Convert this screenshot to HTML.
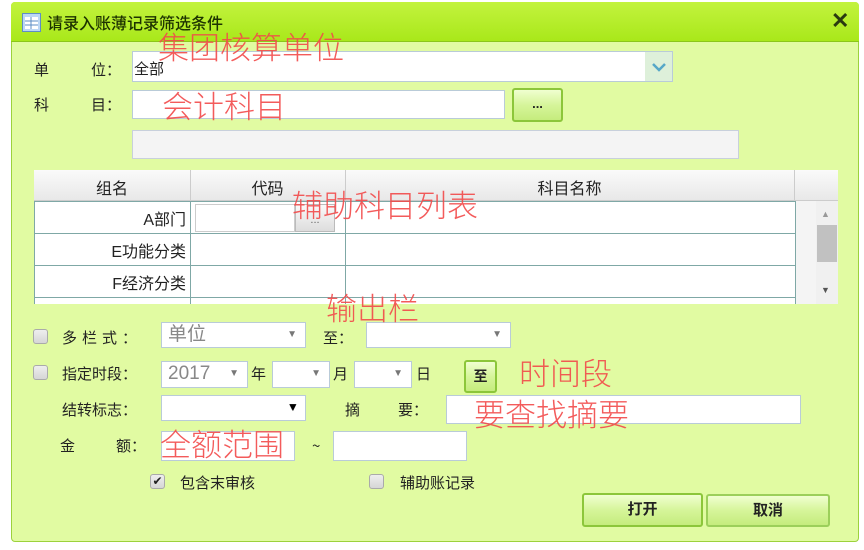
<!DOCTYPE html>
<html><head><meta charset="utf-8"><style>
*{box-sizing:border-box;margin:0;padding:0}
body{width:864px;height:550px;background:#fff;position:relative;overflow:hidden;font-family:"Liberation Sans","Noto Sans CJK SC",sans-serif;font-size:14px;color:#222}
.a{position:absolute}
#dlg{left:11px;top:2px;width:848px;height:540px;background:#e1fba2;border:1px solid #9cd23c;border-radius:4px}
#tb{left:11px;top:2px;width:848px;height:40px;background:linear-gradient(#c3f33e,#a9e81a);border-bottom:1px solid #8bc61a;border-radius:4px 4px 0 0}
.in{position:absolute;background:#fff;border:1px solid #b9cbd8}
.lbl{position:absolute;font-size:15px;color:#222;font-family:"Noto Sans CJK SC",sans-serif;line-height:20px}
.red{position:absolute;color:#f24a4a;font-size:31px;font-family:"Noto Sans CJK SC",sans-serif;font-weight:300;line-height:1;opacity:.9}
.sel{position:absolute;background:#fff;border:1px solid #b9cbd8;font-size:19px;color:#888;padding-left:6px;line-height:24px}
.sel:after{content:"▼";position:absolute;right:8px;top:0;font-size:10px;color:#777}
.cb{position:absolute;width:15px;height:15px;border:1px solid #aaa;border-radius:3px;background:linear-gradient(#eee,#d6d6d6)}
.btn{position:absolute;border:2px solid #8cc63a;border-radius:3px;background:linear-gradient(#f0ffd0,#d6f59a 50%,#c5ec7d);font-weight:bold;font-size:15px;text-align:center;color:#222}
td{border:1px solid #7fa8a6;height:32px;font-size:16px;text-align:right;padding-right:4px;background:#fff}
</style></head><body>
<div class="a" id="dlg"></div>
<div class="a" id="tb"></div>
<svg class="a" style="left:22px;top:13px" width="19" height="19"><rect x=".5" y=".5" width="18" height="18" fill="#bcd7f5" stroke="#5e8dc6"/><rect x="3" y="4" width="13" height="12" fill="#fff"/><path d="M3 8H16M3 12H16M9 4V16" stroke="#5e8dc6"/></svg>
<div class="a" style="left:47px;top:10px;font-size:16px;color:#1d3300;font-family:'Noto Sans CJK SC',sans-serif;font-weight:500">请录入账薄记录筛选条件</div>
<div class="a" style="left:831px;top:8px;font-size:22px;font-weight:bold;color:#2a3a10">✕</div>

<div class="lbl" style="left:34px;top:60px">单</div><div class="lbl" style="left:91px;top:60px">位：</div>
<div class="in" style="left:132px;top:51px;width:541px;height:31px;font-size:15px;padding:6px 0 0 1px">全部</div>
<div class="a" style="left:645px;top:52px;width:27px;height:29px;background:#def0da"></div>
<svg class="a" style="left:651px;top:62px" width="16" height="10"><path d="M2 2L8 8L14 2" stroke="#57a7c8" stroke-width="2.5" fill="none"/></svg>

<div class="lbl" style="left:34px;top:95px">科</div><div class="lbl" style="left:91px;top:95px">目：</div>
<div class="in" style="left:132px;top:90px;width:373px;height:29px"></div>
<div class="btn" style="left:512px;top:88px;width:51px;height:34px;line-height:28px;font-size:13px">...</div>
<div class="in" style="left:132px;top:130px;width:607px;height:29px;background:#f4f4f4;border-color:#c8d0dc"></div>

<div class="a" style="left:34px;top:170px;width:804px;height:134px;background:#f4f4f4"></div>
<div class="a" style="left:34px;top:170px;width:804px;height:31px;background:linear-gradient(#fafafa,#e8e8e8);border-bottom:1px solid #ccc"></div>
<div class="a" style="left:34px;top:175px;width:156px;text-align:center;font-size:16px">组名</div>
<div class="a" style="left:190px;top:170px;width:1px;height:31px;background:#ccc"></div>
<div class="a" style="left:190px;top:175px;width:155px;text-align:center;font-size:16px">代码</div>
<div class="a" style="left:345px;top:170px;width:1px;height:31px;background:#ccc"></div>
<div class="a" style="left:345px;top:175px;width:449px;text-align:center;font-size:16px">科目名称</div>
<div class="a" style="left:794px;top:170px;width:1px;height:31px;background:#ccc"></div>
<div class="a" style="left:34px;top:201px;width:762px;height:103px;overflow:hidden">
<table style="border-collapse:collapse;width:762px"><tr><td style="width:156px">A部门</td><td style="width:155px;position:relative"><div class="a" style="left:4px;top:2px;width:100px;height:28px;border:1px solid #ccc"></div><div class="a" style="left:104px;top:2px;width:40px;height:28px;background:linear-gradient(#fafafa,#ddd);border:1px solid #bbb;text-align:center;font-size:11px;color:#666;line-height:30px">...</div></td><td></td></tr>
<tr><td>E功能分类</td><td></td><td></td></tr><tr><td>F经济分类</td><td></td><td></td></tr><tr><td>项目</td><td></td><td></td></tr></table></div>
<div class="a" style="left:816px;top:201px;width:22px;height:103px;background:#f0f0f0"></div>
<div class="a" style="left:821px;top:209px;font-size:9px;color:#999">▲</div>
<div class="a" style="left:817px;top:225px;width:20px;height:37px;background:#c1c1c1"></div>
<div class="a" style="left:821px;top:285px;font-size:9px;color:#555">▼</div>

<div class="cb" style="left:33px;top:329px"></div>
<div class="lbl" style="left:62px;top:328px;letter-spacing:5px">多栏式：</div>
<div class="sel" style="left:161px;top:322px;width:145px;height:26px">单位</div>
<div class="lbl" style="left:323px;top:328px">至：</div>
<div class="sel" style="left:366px;top:322px;width:145px;height:26px"></div>

<div class="cb" style="left:33px;top:365px"></div>
<div class="lbl" style="left:62px;top:364px">指定时段：</div>
<div class="sel" style="left:161px;top:361px;width:87px;height:27px">2017</div>
<div class="lbl" style="left:251px;top:364px">年</div>
<div class="sel" style="left:272px;top:361px;width:58px;height:27px"></div>
<div class="lbl" style="left:333px;top:364px">月</div>
<div class="sel" style="left:354px;top:361px;width:58px;height:27px"></div>
<div class="lbl" style="left:416px;top:364px">日</div>
<div class="btn" style="left:464px;top:360px;width:33px;height:33px;line-height:28px;font-size:14px">至</div>

<div class="lbl" style="left:62px;top:400px">结转标志：</div>
<div class="sel" style="left:161px;top:395px;width:145px;height:26px"></div>
<div class="a" style="left:287px;top:400px;font-size:12px;color:#000">▼</div>
<div class="lbl" style="left:345px;top:400px">摘</div><div class="lbl" style="left:398px;top:400px">要：</div>
<div class="in" style="left:446px;top:395px;width:355px;height:29px"></div>

<div class="lbl" style="left:60px;top:436px">金</div><div class="lbl" style="left:116px;top:436px">额：</div>
<div class="in" style="left:161px;top:431px;width:134px;height:30px"></div>
<div class="lbl" style="left:312px;top:436px">~</div>
<div class="in" style="left:333px;top:431px;width:134px;height:30px"></div>

<div class="cb" style="left:150px;top:474px;font-size:12px;line-height:13px;text-align:center">✔</div>
<div class="lbl" style="left:180px;top:473px">包含末审核</div>
<div class="cb" style="left:369px;top:474px"></div>
<div class="lbl" style="left:400px;top:473px">辅助账记录</div>
<div class="btn" style="left:582px;top:493px;width:121px;height:34px;line-height:30px">打开</div>
<div class="btn" style="left:706px;top:494px;width:124px;height:33px;line-height:29px;border-color:#9ccf5a">取消</div>

<div class="red" style="left:158px;top:30px">集团核算单位</div>
<div class="red" style="left:162px;top:89px">会计科目</div>
<div class="red" style="left:292px;top:188px">辅助科目列表</div>
<div class="red" style="left:326px;top:291px">输出栏</div>
<div class="red" style="left:519px;top:356px">时间段</div>
<div class="red" style="left:474px;top:397px">要查找摘要</div>
<div class="red" style="left:160px;top:427px">全额范围</div>
</body></html>
